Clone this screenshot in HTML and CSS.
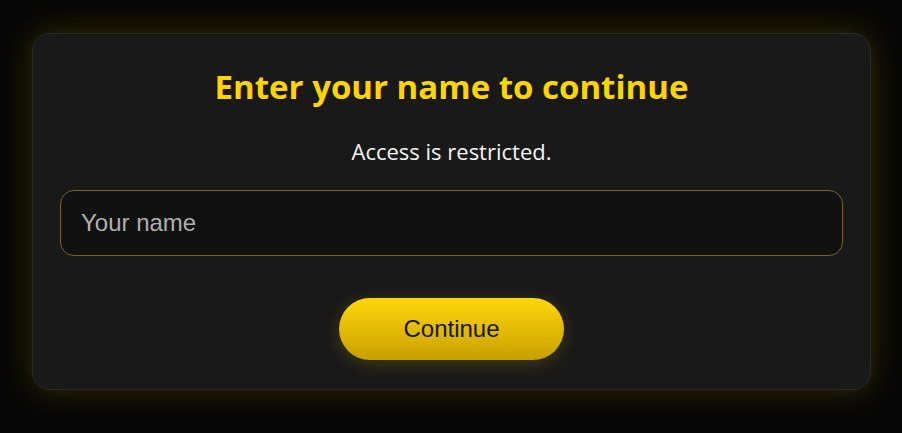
FILE: index.html
```html
<!DOCTYPE html>
<html lang="en">
<head>
    <meta charset="UTF-8">
    <meta name="viewport" content="width=device-width, initial-scale=1.0">
    <title>Access</title>
    <link rel="stylesheet" href="styles.css">
</head>
<body>
    <div class="gate-card">
        <h1>Enter your name to continue</h1>
        <p class="gate-note">Access is restricted.</p>
        <input type="text" class="name-input" placeholder="Your name">
        <button class="continue-btn">Continue</button>
    </div>
</body>
</html>
```

FILE: styles.css
```css
body {
    margin: 0;
    padding: 33px 31px 0 32px;
    background-color: #060606;
    font-family: "Open Sans", sans-serif;
    height: 433px;
    box-sizing: border-box;
}
.gate-card {
    display: flex;
    flex-direction: column;
    align-items: center;
    height: 357px;
    box-sizing: border-box;
    padding: 0 27px;
    background-color: #191919;
    border: 1px solid #2b2a22;
    border-radius: 18px;
    box-shadow: 0 0 32px rgba(255, 215, 0, 0.2);
}
.gate-card h1 {
    margin: 31px 0 0;
    color: #ffd500;
    font-size: 33px;
    font-weight: 700;
    line-height: 44px;
}
.gate-note {
    margin: 27px 0 0;
    color: #f4f4f4;
    font-size: 22px;
    line-height: 30px;
}
.name-input {
    margin-top: 24px;
    width: 100%;
    height: 66px;
    box-sizing: border-box;
    padding: 0 20px;
    background-color: #111112;
    border: 1px solid #75641a;
    border-radius: 14px;
    color: #eee;
    font-family: "Liberation Sans", Arial, sans-serif;
    font-size: 24px;
    outline: none;
}
.name-input::placeholder {
    color: #aeaeae;
}
.continue-btn {
    margin-top: 42px;
    width: 225px;
    height: 62px;
    border: none;
    border-radius: 31px;
    background: linear-gradient(180deg, #ffd60a 0%, #c8a000 100%);
    color: #161616;
    font-family: "Liberation Sans", Arial, sans-serif;
    font-size: 24px;
    box-shadow: 0 4px 18px rgba(255, 215, 0, 0.18);
    cursor: pointer;
}
```
